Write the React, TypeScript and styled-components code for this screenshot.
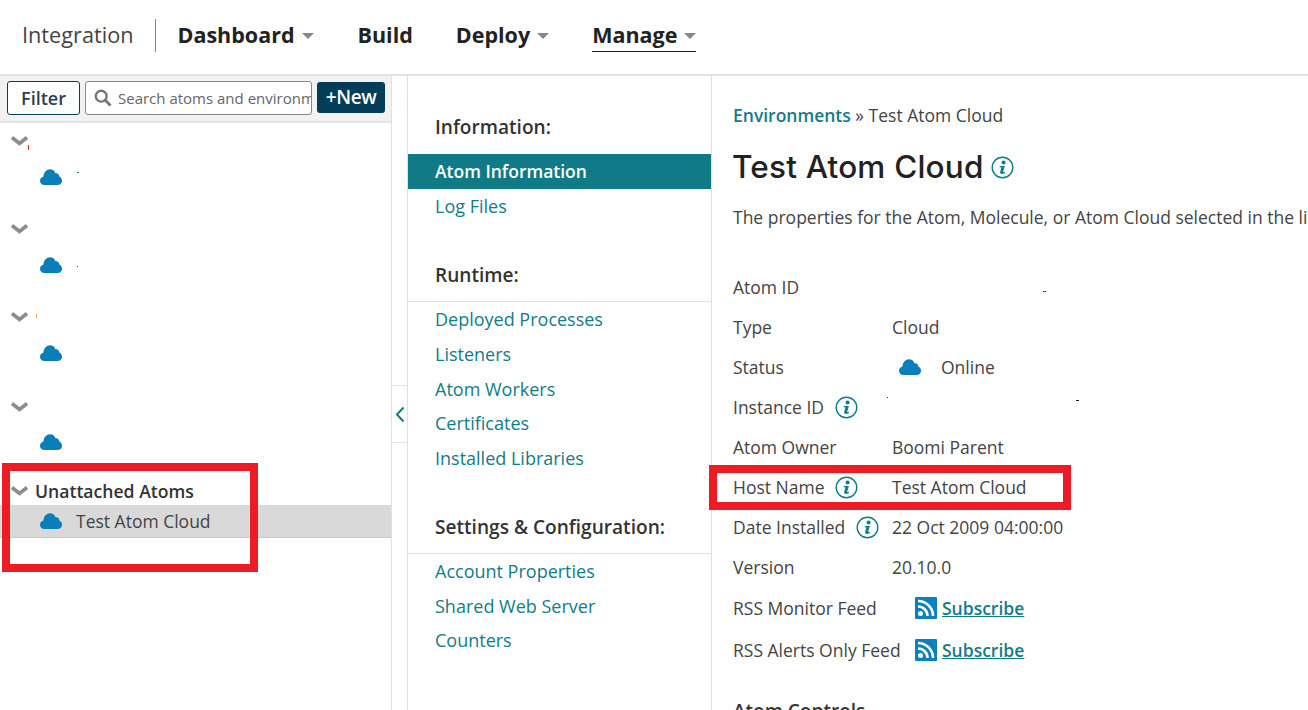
import React from 'react';
import styled, {createGlobalStyle} from 'styled-components';

const teal = '#127c87';

const GlobalStyle = createGlobalStyle`
	html, body {
		margin: 0;
		padding: 0;
		background: #fff;
		overflow: hidden;
	}
	* {
		box-sizing: border-box;
	}
	svg {
		flex: none;
	}
`;

const Page = styled.div`
	position: relative;
	width: 1308px;
	height: 710px;
	overflow: hidden;
	font-family: "Open Sans", "Liberation Sans", sans-serif;
	color: #333;
`;

const Header = styled.header`
	display: flex;
	align-items: center;
	height: 76px;
	padding: 0 0 4px 22px;
	border-bottom: 2px solid #e4e4e4;
`;

const Brand = styled.div`
	font-size: 21.7px;
	color: #444;
	padding-right: 21px;
	height: 33px;
	line-height: 31px;
	border-right: 1px solid #888;
	margin-right: 22px;
`;

const TopLink = styled.div<{$gap: number; $active?: boolean}>`
	display: flex;
	align-items: center;
	gap: 7px;
	margin-right: ${props => props.$gap}px;
	height: 33px;
	font-size: 21.5px;
	font-weight: 700;
	color: #222;
	border-bottom: ${props => props.$active ? '1px solid #222' : '1px solid transparent'};
`;

const Caret = styled.span`
	width: 0;
	height: 0;
	margin-top: 3px;
	border-left: 6px solid transparent;
	border-right: 6px solid transparent;
	border-top: 6px solid #888;
`;

const Body = styled.div`
	display: grid;
	grid-template-columns: 392px 16px 304px 1fr;
	height: 634px;
`;

const Sidebar = styled.aside`
	border-right: 1px solid #e0e0e0;
`;

const Toolbar = styled.div`
	display: flex;
	align-items: center;
	height: 47px;
	padding: 0 5px 2px 7px;
	background: #f2f2f2;
	border-bottom: 2px solid #e4e4e4;
`;

const FilterButton = styled.div`
	display: flex;
	flex: none;
	align-items: center;
	justify-content: center;
	width: 73px;
	height: 34px;
	background: #fff;
	border: 1px solid #033d58;
	border-radius: 3px;
	font-size: 18px;
	font-weight: 600;
	color: #2c3e50;
	margin-right: 5px;
`;

const Search = styled.div`
	display: flex;
	flex: none;
	align-items: center;
	gap: 6px;
	width: 227px;
	height: 34px;
	padding-left: 8px;
	background: #fff;
	border: 1px solid #888;
	border-radius: 3px;
	font-size: 15px;
	color: #666;
	margin-right: 5px;
`;

const SearchText = styled.span`
	flex: 1;
	min-width: 0;
	overflow: hidden;
	white-space: nowrap;
`;

const NewButton = styled.div`
	display: flex;
	flex: none;
	align-items: center;
	justify-content: center;
	width: 68px;
	height: 31px;
	margin-top: -1px;
	background: #033d58;
	border-radius: 3px;
	color: #fff;
	font-size: 19px;
	font-weight: 600;
	letter-spacing: -0.4px;
`;

const Group = styled.div<{$top: number}>`
	margin-top: ${props => props.$top}px;
`;

const GroupRow = styled.div`
	display: flex;
	align-items: center;
	gap: 6px;
	height: 24px;
	padding-left: 10px;
	font-size: 17.6px;
	font-weight: 600;
	color: #333;
`;

const ChildRow = styled.div<{$selected?: boolean; $top: number}>`
	display: flex;
	align-items: center;
	gap: 14px;
	height: 33px;
	margin-top: ${props => props.$top}px;
	padding-left: 40px;
	font-size: 17.5px;
	color: #444;
	background: ${props => props.$selected ? '#d9d9d9' : 'transparent'};
	border-bottom: 1px solid ${props => props.$selected ? '#c8c8c8' : 'transparent'};
`;

const Collapse = styled.div`
	display: flex;
	flex-direction: column;
	padding-top: 309px;
	border-right: 1px solid #e0e0e0;
`;

const CollapseHandle = styled.div`
	display: flex;
	align-items: center;
	justify-content: center;
	height: 58px;
	border-top: 1px solid #e4e4e4;
	border-bottom: 1px solid #e4e4e4;
`;

const Nav = styled.nav`
	border-right: 1px solid #e0e0e0;
`;

const NavHeading = styled.div<{$top: number; $ruled?: boolean}>`
	margin-top: ${props => props.$top}px;
	height: 39px;
	padding-left: 27px;
	font-size: 19.1px;
	line-height: 24px;
	font-weight: 600;
	color: #333;
	border-bottom: ${props => props.$ruled ? '1px solid #e0e0e0' : 'none'};
`;

const NavItem = styled.div<{$active?: boolean}>`
	height: 34.7px;
	padding-left: 27px;
	font-size: ${props => props.$active ? '17.5px' : '18px'};
	line-height: 34.7px;
	font-weight: ${props => props.$active ? 600 : 500};
	color: ${props => props.$active ? '#fff' : teal};
	background: ${props => props.$active ? '#107a86' : 'transparent'};
`;

const Content = styled.main`
	padding: 24px 0 0 21px;
	white-space: nowrap;
	overflow: hidden;
`;

const Crumbs = styled.div`
	font-size: 17.5px;
	line-height: 30px;
	color: #444;
`;

const CrumbLink = styled.span`
	color: ${teal};
	font-weight: 600;
`;

const Title = styled.h1`
	display: flex;
	align-items: center;
	gap: 7px;
	margin: 17px 0 0 -1px;
	font-family: Inter, "Open Sans", sans-serif;
	font-size: 31.5px;
	line-height: 40px;
	font-weight: 500;
	letter-spacing: 0.2px;
	color: #222;
`;

const Lead = styled.p`
	margin: 18px 0 0;
	font-size: 17.5px;
	line-height: 24px;
	color: #444;
`;

const Details = styled.div`
	display: grid;
	grid-template-columns: 159px 1fr;
	margin-top: 38px;
	font-size: 17.5px;
	color: #444;
`;

const Label = styled.div`
	display: flex;
	align-items: center;
	gap: 11px;
	min-height: 40px;
`;

const Value = styled.div<{$indent?: number}>`
	display: flex;
	align-items: center;
	gap: 5px;
	padding-left: ${props => props.$indent ?? 0}px;
`;

const StatusValue = styled(Value)`
	gap: 20px;
`;

const FeedLabel = styled(Label)`
	min-height: 42px;
`;

const Subscribe = styled.a`
	color: ${teal};
	font-weight: 600;
	text-decoration: underline;
`;

const SectionTitle = styled.div`
	margin-top: 27px;
	font-size: 19px;
	font-weight: 600;
	color: #333;
`;

const Highlight = styled.div<{$x: number; $y: number; $w: number; $h: number}>`
	position: absolute;
	left: ${props => props.$x}px;
	top: ${props => props.$y}px;
	width: ${props => props.$w}px;
	height: ${props => props.$h}px;
	border: 8px solid #ed1c24;
`;

// leftovers of the redacted names in the screenshot
const Speck = styled.span<{$x: number; $y: number; $w: number; $h: number; $c: string}>`
	position: absolute;
	left: ${props => props.$x}px;
	top: ${props => props.$y}px;
	width: ${props => props.$w}px;
	height: ${props => props.$h}px;
	background: ${props => props.$c};
`;

const Chevron = () => (
	<svg width="19" height="12" viewBox="0 0 19 12">
		<path d="M2 2.5 L9.5 8.5 L17 2.5" fill="none" stroke="#8c8c8c" strokeWidth="3.6"/>
	</svg>
);

const Cloud = () => (
	<svg width="22" height="16" viewBox="0 0 22 16">
		<path d="M4.5 16 C1.8 16 0 14.2 0 11.8 C0 9.6 1.4 8 3.4 7.4 C3.8 3.2 6.6 0.2 10 0.2 C12.6 0.2 14.6 1.8 15.5 4.2 C16 4.1 16.4 4.1 16.8 4.3 C18.4 4.7 19.2 6 19.4 7.6 C21 8.4 22 9.9 22 11.8 C22 14.2 20.2 16 17.6 16 Z" fill="#0a7dbb"/>
	</svg>
);

const SearchIcon = () => (
	<svg width="18" height="18" viewBox="0 0 18 18">
		<circle cx="7.2" cy="7.2" r="5.4" fill="none" stroke="#777" strokeWidth="2.4"/>
		<path d="M11 11 L16.5 16.5" stroke="#777" strokeWidth="2.8"/>
	</svg>
);

const BackArrow = () => (
	<svg width="10" height="17" viewBox="0 0 10 17">
		<path d="M8.5 1.5 L2 8.5 L8.5 15.5" fill="none" stroke={teal} strokeWidth="2"/>
	</svg>
);

const Info = () => (
	<svg width="23" height="23" viewBox="0 0 23 23">
		<circle cx="11.5" cy="11.5" r="10.3" fill="none" stroke={teal} strokeWidth="1.4"/>
		<circle cx="12.6" cy="6.4" r="2" fill={teal}/>
		<path d="M8.8 10 H13.8 L12.2 15.8 Q12 16.6 14 15.8 L14 17 Q11.6 18.2 10 17.8 Q8.8 17.4 9.2 16 L10.4 11.2 H8.8 Z" fill={teal}/>
	</svg>
);

const Rss = () => (
	<svg width="22" height="22" viewBox="0 0 22 22">
		<rect width="22" height="22" rx="1" fill="#0a80c0"/>
		<circle cx="5.5" cy="16.5" r="2.5" fill="#fff"/>
		<path d="M3 9.5 A9.5 9.5 0 0 1 12.5 19" fill="none" stroke="#fff" strokeWidth="2.6"/>
		<path d="M3 4 A15 15 0 0 1 18 19" fill="none" stroke="#fff" strokeWidth="2.6"/>
	</svg>
);

const groups = [
	{id: 0, top: 6, childTop: 8},
	{id: 1, top: 23, childTop: 8},
	{id: 2, top: 23, childTop: 8},
	{id: 3, top: 25, childTop: 7},
];
const runtime = ['Deployed Processes', 'Listeners', 'Atom Workers', 'Certificates', 'Installed Libraries'];
const settings = ['Account Properties', 'Shared Web Server', 'Counters'];
const specks = [
	{x: 28, y: 145, w: 1, h: 5, c: '#e8202a'},
	{x: 77, y: 172, w: 2, h: 1, c: '#33718a'},
	{x: 77, y: 266, w: 1, h: 1, c: '#33718a'},
	{x: 36, y: 314, w: 1, h: 4, c: '#f0a040'},
	{x: 1043, y: 291, w: 3, h: 1, c: '#444'},
	{x: 887, y: 397, w: 1, h: 1, c: '#333'},
	{x: 1076, y: 400, w: 3, h: 1, c: '#222'},
];

const App = () => (
	<Page>
		<GlobalStyle/>
		<Header>
			<Brand>Integration</Brand>
			<TopLink $gap={44}>Dashboard<Caret/></TopLink>
			<TopLink $gap={43}>Build</TopLink>
			<TopLink $gap={43}>Deploy<Caret/></TopLink>
			<TopLink $gap={0} $active>Manage<Caret/></TopLink>
		</Header>
		<Body>
			<Sidebar>
				<Toolbar>
					<FilterButton>Filter</FilterButton>
					<Search><SearchIcon/><SearchText>Search atoms and environments</SearchText></Search>
					<NewButton>+New</NewButton>
				</Toolbar>
				{groups.map(g => (
					<Group key={g.id} $top={g.top}>
						<GroupRow><Chevron/></GroupRow>
						<ChildRow $top={g.childTop}><Cloud/></ChildRow>
					</Group>
				))}
				<Group $top={20}>
					<GroupRow><Chevron/>Unattached Atoms</GroupRow>
					<ChildRow $top={2} $selected><Cloud/>Test Atom Cloud</ChildRow>
				</Group>
			</Sidebar>
			<Collapse>
				<CollapseHandle><BackArrow/></CollapseHandle>
			</Collapse>
			<Nav>
				<NavHeading $top={39}>Information:</NavHeading>
				<NavItem $active>Atom Information</NavItem>
				<NavItem>Log Files</NavItem>
				<NavHeading $top={40} $ruled>Runtime:</NavHeading>
				{runtime.map(item => <NavItem key={item}>{item}</NavItem>)}
				<NavHeading $top={39} $ruled>Settings &amp; Configuration:</NavHeading>
				{settings.map(item => <NavItem key={item}>{item}</NavItem>)}
			</Nav>
			<Content>
				<Crumbs><CrumbLink>Environments</CrumbLink> » Test Atom Cloud</Crumbs>
				<Title>Test Atom Cloud <Info/></Title>
				<Lead>The properties for the Atom, Molecule, or Atom Cloud selected in the list.</Lead>
				<Details>
					<Label>Atom ID</Label><Value/>
					<Label>Type</Label><Value>Cloud</Value>
					<Label>Status</Label><StatusValue $indent={7}><Cloud/>Online</StatusValue>
					<Label>Instance ID <Info/></Label><Value/>
					<Label>Atom Owner</Label><Value>Boomi Parent</Value>
					<Label>Host Name <Info/></Label><Value>Test Atom Cloud</Value>
					<Label>Date Installed <Info/></Label><Value>22 Oct 2009 04:00:00</Value>
					<Label>Version</Label><Value>20.10.0</Value>
					<FeedLabel>RSS Monitor Feed</FeedLabel><Value $indent={23}><Rss/><Subscribe>Subscribe</Subscribe></Value>
					<FeedLabel>RSS Alerts Only Feed</FeedLabel><Value $indent={23}><Rss/><Subscribe>Subscribe</Subscribe></Value>
				</Details>
				<SectionTitle>Atom Controls</SectionTitle>
			</Content>
		</Body>
		{specks.map(s => <Speck key={`${s.x}-${s.y}`} $x={s.x} $y={s.y} $w={s.w} $h={s.h} $c={s.c}/>)}
		<Highlight $x={2} $y={463} $w={256} $h={109}/>
		<Highlight $x={709} $y={465} $w={362} $h={45}/>
	</Page>
);

export default App;
